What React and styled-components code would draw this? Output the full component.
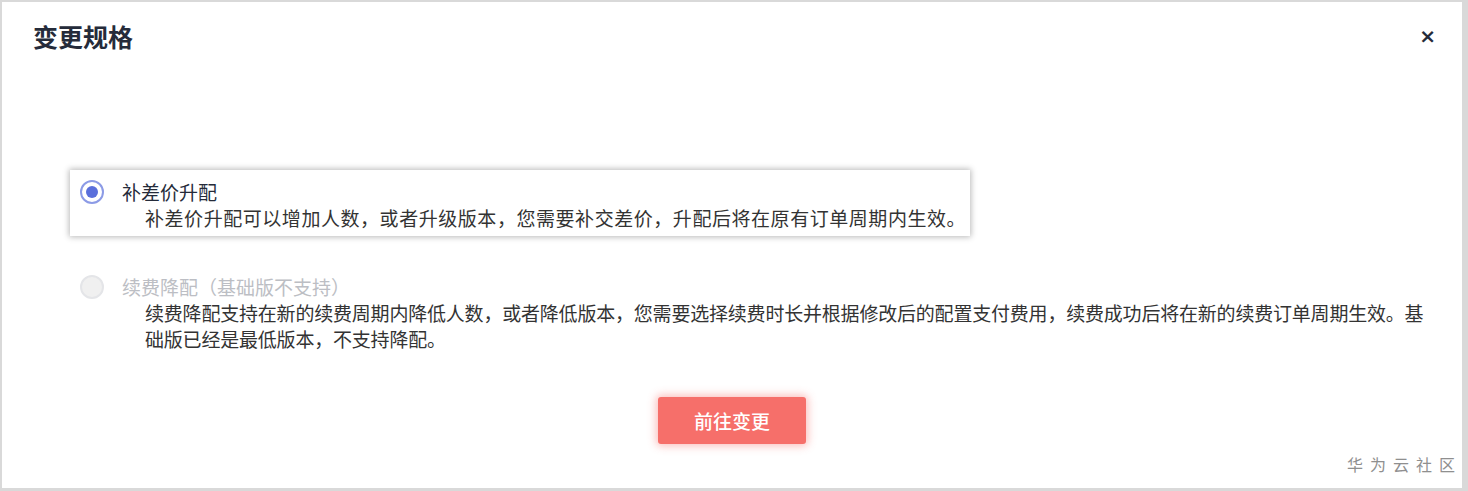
import React from "react";
import styled, { createGlobalStyle } from "styled-components";

const GlobalStyle = createGlobalStyle`
  html, body {
    margin: 0;
    padding: 0;
    background: #d9d9d9;
  }
  body {
    font-family: "Noto Sans CJK SC", "Noto Sans", sans-serif;
  }
`;

export const Frame = styled.div`
  width: 1468px;
  height: 491px;
  padding: 2px 6px 3px 2px;
  box-sizing: border-box;
  background: #d9d9d9;
`;

export const Dialog = styled.div`
  position: relative;
  width: 100%;
  height: 100%;
  background: #ffffff;
  display: flex;
  flex-direction: column;
`;

export const Header = styled.div`
  display: flex;
  justify-content: space-between;
  align-items: center;
  padding: 20px 26px 20px 31px;
`;

export const Title = styled.h2`
  margin: 0;
  font-size: 25px;
  line-height: 28px;
  font-weight: 700;
  color: #252b3a;
`;

export const Close = styled.span`
  font-family: "DejaVu Sans", sans-serif;
  font-size: 20px;
  font-weight: 700;
  color: #252b3a;
  line-height: 28px;
  cursor: pointer;
`;

export const Body = styled.div`
  display: flex;
  flex-direction: column;
  align-items: flex-start;
  gap: 29px;
  padding: 100px 0 0 68px;
`;

export const Option = styled.div`
  display: grid;
  grid-template-columns: 24px auto;
  column-gap: 18px;
  max-width: 1365px;
  box-sizing: border-box;
  padding: 9px 4px 5px 10px;
  background: #fff;
  box-shadow: ${(p) => (p.active ? "0 0 6px 1px rgba(0, 0, 0, 0.28)" : "none")};
`;

export const Radio = styled.span`
  width: 24px;
  height: 24px;
  margin-top: 1px;
  box-sizing: border-box;
  border-radius: 50%;
  display: flex;
  align-items: center;
  justify-content: center;
  border: 2px solid ${(p) => (p.checked ? "#8c9be6" : "#e4e5e8")};
  background: ${(p) => (p.checked ? "#fff" : "#f0f0f0")};

  &::after {
    content: "";
    display: ${(p) => (p.checked ? "block" : "none")};
    width: 12px;
    height: 12px;
    border-radius: 50%;
    background: #5a6fdb;
  }
`;

export const Label = styled.div`
  font-size: 19px;
  line-height: 26px;
  color: ${(p) => (p.disabled ? "#bcbec4" : "#252b3a")};
`;

export const Desc = styled.div`
  grid-column: 2;
  padding-left: 23px;
  font-size: 19px;
  line-height: 26px;
  color: #333333;
  letter-spacing: ${(p) => p.spacing || "0"};
`;

export const Actions = styled.div`
  display: flex;
  justify-content: center;
  margin-top: 40px;
`;

export const Button = styled.button`
  width: 148px;
  height: 47px;
  border: none;
  border-radius: 3px;
  background: #f66f6a;
  color: #fff;
  font-family: "Noto Sans CJK SC", sans-serif;
  font-size: 19px;
  font-weight: 500;
  box-shadow: 0 0 8px 2px rgba(246, 111, 106, 0.45);
  cursor: pointer;
`;

export const Watermark = styled.div`
  position: absolute;
  right: 0;
  bottom: 12px;
  font-size: 16px;
  letter-spacing: 7px;
  color: #8f8f8f;
`;

export default function App() {
  return (
    <Frame>
      <GlobalStyle />
      <Dialog>
        <Header>
          <Title>变更规格</Title>
          <Close>×</Close>
        </Header>
        <Body>
          <Option active>
            <Radio checked />
            <Label>补差价升配</Label>
            <Desc spacing="0.55px">
              补差价升配可以增加人数，或者升级版本，您需要补交差价，升配后将在原有订单周期内生效。
            </Desc>
          </Option>
          <Option>
            <Radio />
            <Label disabled>续费降配（基础版不支持）</Label>
            <Desc spacing="-0.2px">
              续费降配支持在新的续费周期内降低人数，或者降低版本，您需要选择续费时长并根据修改后的配置支付费用，续费成功后将在新的续费订单周期生效。基础版已经是最低版本，不支持降配。
            </Desc>
          </Option>
        </Body>
        <Actions>
          <Button>前往变更</Button>
        </Actions>
        <Watermark>华为云社区</Watermark>
      </Dialog>
    </Frame>
  );
}
